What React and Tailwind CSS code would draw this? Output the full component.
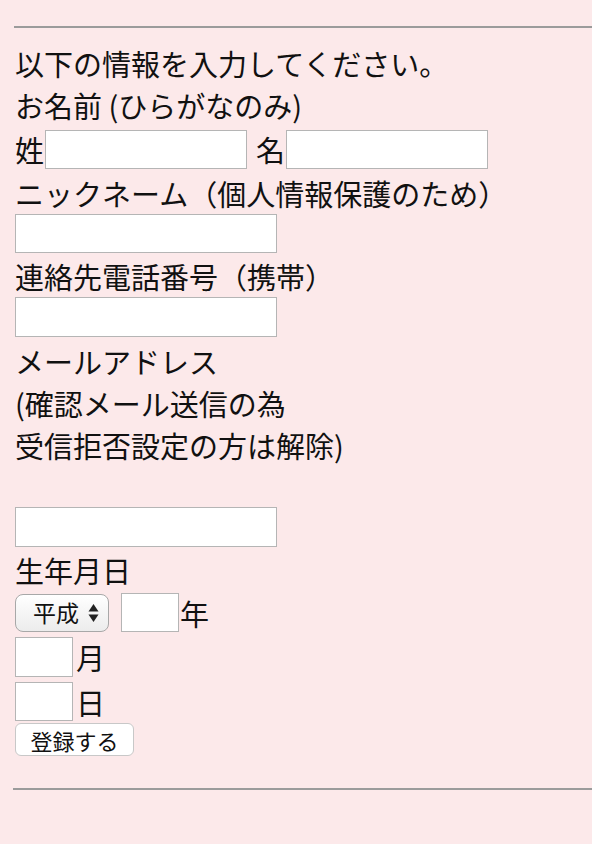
export default function App() {
  const font = { fontFamily: '"Noto Sans CJK JP", "Noto Sans", sans-serif' };
  const inputCls = "block bg-white border border-[#b5b5b5] outline-none";
  return (
    <div
      className="w-full min-h-[844px] bg-[#fce9ea] text-[#111] text-[29px] leading-[42px] overflow-hidden"
      style={font}
    >
      <div className="h-[26px]" />
      <div className="ml-[14px] h-[2px] bg-[#9b9b9b]" />
      <div className="pl-[15px] pt-[14px]">
        <div className="h-[42px] whitespace-nowrap">以下の情報を入力してください。</div>
        <div className="h-[42px] whitespace-nowrap">お名前 (ひらがなのみ)</div>
        <div className="h-[46px] flex items-center">
          <span>姓</span>
          <input className={`${inputCls} ml-[1px] w-[202px] h-[39px]`} />
          <span className="ml-[9px]">名</span>
          <input className={`${inputCls} ml-[1px] w-[202px] h-[39px]`} />
        </div>
        <div className="h-[42px] whitespace-nowrap">ニックネーム（個人情報保護のため）</div>
        <input className={`${inputCls} w-[262px] h-[39px]`} />
        <div className="h-[42px] mt-[2px] whitespace-nowrap">連絡先電話番号（携帯）</div>
        <input className={`${inputCls} w-[262px] h-[40px]`} />
        <div className="h-[42px] mt-[3px]">メールアドレス</div>
        <div className="h-[42px]">(確認メール送信の為</div>
        <div className="h-[42px]">受信拒否設定の方は解除)</div>
        <div className="h-[41px]" />
        <input className={`${inputCls} w-[262px] h-[40px]`} />
        <div className="h-[42px] mt-[2px]">生年月日</div>
        <div className="flex items-center h-[39px] mt-[2px]">
          <div className="relative w-[94px] h-[38px] rounded-[8px] border border-[#a8a8a8] bg-gradient-to-b from-white to-[#ececec] flex items-center text-[23px] leading-none">
            <span className="ml-[17px]">平成</span>
            <svg className="ml-[9px]" width="11" height="20" viewBox="0 0 11 20">
              <path d="M5.5 1 L10.5 8.5 L0.5 8.5 Z" fill="#222" />
              <path d="M5.5 19 L10.5 11.5 L0.5 11.5 Z" fill="#222" />
            </svg>
          </div>
          <input className={`${inputCls} ml-[12px] w-[58px] h-[39px]`} />
          <span className="ml-[1px]">年</span>
        </div>
        <div className="flex items-center h-[40px] mt-[5px]">
          <input className={`${inputCls} w-[58px] h-[40px]`} />
          <span className="ml-[3px]">月</span>
        </div>
        <div className="flex items-center h-[39px] mt-[5px]">
          <input className={`${inputCls} w-[58px] h-[39px]`} />
          <span className="ml-[3px]">日</span>
        </div>
        <button className="mt-[2px] w-[119px] h-[33px] rounded-[6px] border border-[#c8c8c8] bg-white text-[22px] leading-none flex items-center justify-center">
          登録する
        </button>
      </div>
      <div className="h-[32px]" />
      <div className="ml-[13px] h-[2px] bg-[#9b9b9b]" />
    </div>
  );
}
